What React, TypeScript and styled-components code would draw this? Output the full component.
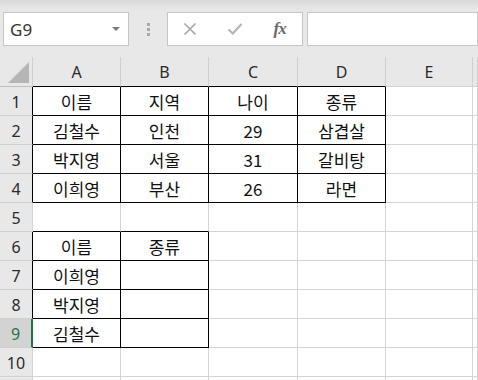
import React from "react";
import styled, { createGlobalStyle } from "styled-components";

const GlobalStyle = createGlobalStyle`
  html, body {
    margin: 0;
    padding: 0;
    background: #e8e8e8;
    overflow: hidden;
  }
  body {
    font-family: "Noto Sans CJK KR", "Noto Sans", sans-serif;
  }
`;

const Window = styled.div`
  width: 478px;
  height: 380px;
  display: flex;
  flex-direction: column;
  background: #e8e8e8;
  overflow: hidden;
`;

const FormulaBar = styled.div`
  flex: none;
  height: 57px;
  box-sizing: border-box;
  padding: 12px 0 11px 3px;
  display: flex;
  align-items: stretch;
  background: linear-gradient(#d9d9d9 0px, #e6e6e6 9px, #e8e8e8 12px);
`;

const Field = styled.div<{ $w?: number; $grow?: boolean }>`
  box-sizing: border-box;
  width: ${(p) => (p.$w ? `${p.$w}px` : "auto")};
  flex: ${(p) => (p.$grow ? "1" : "none")};
  background: #ffffff;
  border: 1px solid #c6c6c6;
  display: flex;
  align-items: center;
`;

const NameText = styled.span`
  flex: 1;
  padding-left: 6px;
  font-family: "Noto Sans", "Liberation Sans", sans-serif;
  font-size: 17px;
  color: #333333;
`;

const DropArrow = styled.span`
  width: 0;
  height: 0;
  margin-right: 8px;
  border-left: 4px solid transparent;
  border-right: 4px solid transparent;
  border-top: 4px solid #7a7a7a;
`;

const Grip = styled.div`
  width: 38px;
  display: flex;
  flex-direction: column;
  align-items: center;
  justify-content: center;
  gap: 2px;
`;

const GripDot = styled.span`
  width: 3px;
  height: 3px;
  background: #a8a8a8;
`;

const ToolBtn = styled.span`
  width: 45px;
  display: flex;
  justify-content: center;
  align-items: center;
`;

const Fx = styled.span`
  font-family: "Liberation Serif", serif;
  font-style: italic;
  font-weight: bold;
  font-size: 17px;
  color: #6a6a6a;
  letter-spacing: -1px;
`;

const Gap = styled.div`
  width: 4px;
`;

const Sheet = styled.div`
  flex: none;
  display: grid;
  grid-template-columns: 33px 88px 88px 89px 88px 87px 1fr;
  grid-template-rows: 30px repeat(11, 29px);
  background: #ffffff;
`;

const Cell = styled.div<{ $r: string; $b: string }>`
  box-sizing: border-box;
  display: flex;
  align-items: center;
  justify-content: center;
  border-right: 1px solid ${(p) => p.$r};
  border-bottom: 1px solid ${(p) => p.$b};
  font-size: 17px;
  color: #111111;
  padding-top: 1px;
`;

const HeadCell = styled(Cell)<{ $active?: boolean }>`
  background: ${(p) => (p.$active ? "#d3d3d3" : "#e8e8e8")};
  color: ${(p) => (p.$active ? "#217346" : "#2b2b2b")};
  font-family: "Noto Sans", "Liberation Sans", sans-serif;
  font-size: 16px;
  ${(p) => (p.$active ? "border-right: 2px solid #217346;" : "")}
`;

const Corner = styled.div`
  box-sizing: border-box;
  background: #e8e8e8;
  border-right: 1px solid #d0d0d0;
  border-bottom: 1px solid #bfbfbf;
  position: relative;
  &::after {
    content: "";
    position: absolute;
    right: 3px;
    bottom: 3px;
    border-left: 21px solid transparent;
    border-bottom: 21px solid #b5b5b5;
  }
`;

const GRID = "#d4d4d4";
const INK = "#000000";

const columns = ["A", "B", "C", "D", "E", ""];

// sheet content, keyed by row number
const data: Record<number, string[]> = {
  1: ["이름", "지역", "나이", "종류"],
  2: ["김철수", "인천", "29", "삼겹살"],
  3: ["박지영", "서울", "31", "갈비탕"],
  4: ["이희영", "부산", "26", "라면"],
  6: ["이름", "종류"],
  7: ["이희영", ""],
  8: ["박지영", ""],
  9: ["김철수", ""],
};

// bordered ranges: rows 1-4 x A-D, rows 6-9 x A-B
const boxed = (r: number, c: number) =>
  (r >= 1 && r <= 4 && c >= 1 && c <= 4) || (r >= 6 && r <= 9 && c >= 1 && c <= 2);

const edge = (a: boolean, b: boolean) => (a || b ? INK : GRID);

export default function App() {
  const rows = Array.from({ length: 11 }, (_, i) => i + 1);

  return (
    <Window>
      <GlobalStyle />
      <FormulaBar>
        <Field $w={126}>
          <NameText>G9</NameText>
          <DropArrow />
        </Field>
        <Grip>
          <GripDot />
          <GripDot />
          <GripDot />
        </Grip>
        <Field $w={136}>
          <ToolBtn>
            <svg width="14" height="14" viewBox="0 0 14 14">
              <path d="M1.5 1.5 L12.5 12.5 M12.5 1.5 L1.5 12.5" stroke="#a5a5a5" strokeWidth="1.6" fill="none" />
            </svg>
          </ToolBtn>
          <ToolBtn>
            <svg width="16" height="14" viewBox="0 0 16 14">
              <path d="M1.5 7.5 L5.8 11.5 L14.5 2" stroke="#b3b3b3" strokeWidth="2" fill="none" />
            </svg>
          </ToolBtn>
          <ToolBtn>
            <Fx>fx</Fx>
          </ToolBtn>
        </Field>
        <Gap />
        <Field $grow />
      </FormulaBar>

      <Sheet>
        <Corner />
        {columns.map((col, c) => (
          <HeadCell key={col || "F"} $r="#d0d0d0" $b={edge(false, boxed(1, c + 1))}>
            {col}
          </HeadCell>
        ))}
        {rows.map((r) => (
          <React.Fragment key={r}>
            {/* the last row is only a sliver at the window's edge */}
            <HeadCell $active={r === 9} $r={edge(false, boxed(r, 1))} $b="#d0d0d0">
              {r <= 10 ? r : ""}
            </HeadCell>
            {columns.map((col, i) => {
              const c = i + 1;
              const on = boxed(r, c);
              return (
                <Cell
                  key={col || "F"}
                  $r={edge(on, boxed(r, c + 1))}
                  $b={edge(on, boxed(r + 1, c))}
                >
                  {data[r]?.[i] ?? ""}
                </Cell>
              );
            })}
          </React.Fragment>
        ))}
      </Sheet>
    </Window>
  );
}
